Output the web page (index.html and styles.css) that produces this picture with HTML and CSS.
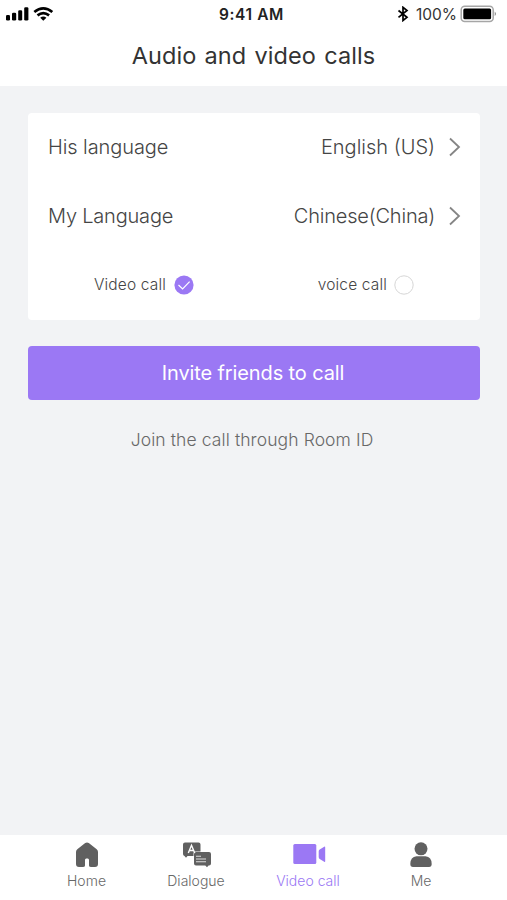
FILE: index.html
```html
<!DOCTYPE html>
<html lang="en">
<head>
<meta charset="utf-8">
<title>Audio and video calls</title>
<link rel="stylesheet" href="styles.css">
</head>
<body>
<div class="app">
  <header class="header">
    <div class="status">
      <div class="status-left">
        <svg width="50" height="16" viewBox="0 0 50 16">
          <rect x="1" y="9" width="4" height="5.500" rx="1.3"/><rect x="7" y="6.800" width="4.2" height="7.700" rx="1.3"/><rect x="13.2" y="4.200" width="4" height="10.300" rx="1.3"/><rect x="19.2" y="1.200" width="4.2" height="13.300" rx="1.3"/>
          <g fill="none" stroke="#000" stroke-width="2.7"><path d="M29.3 6Q38.300 -1.200 47.300 6"/><path d="M32.500 9.400Q38.300 5 44.100 9.400"/></g>
          <path d="M35.200 11.700Q38.300 9.400 41.400 11.700L38.300 14.700Z"/>
        </svg>
      </div>
      <span class="time">9:41 AM</span>
      <div class="status-right">
        <svg class="bluetooth" width="12" height="16" viewBox="0 0 12 16"><path d="M1.500 4.500L10 11.300L6 14.500V1.300L10 4.500L1.500 11.300" fill="none" stroke="#000" stroke-width="1.7"/></svg>
        <span class="percent">100%</span>
        <svg width="38" height="18" viewBox="0 0 38 18"><rect x="1.200" y="1.200" width="32" height="15.200" rx="3.500" fill="#fff" stroke="#a6a6a6" stroke-width="1.500"/><rect x="3.300" y="3.600" width="27.800" height="10.600" rx="1.500"/><path d="M34.700 6.400Q37.300 8.700 34.700 11Z" fill="#8d8d8d"/></svg>
      </div>
    </div>
    <h1 class="title">Audio and video calls</h1>
  </header>
  <main class="main">
    <section class="card">
      <div class="row">
        <span class="his">His language</span>
        <span class="value english">English (US)</span>
        <svg class="chevron" width="12" height="20" viewBox="0 0 12 20"><path d="M1 1.500L10 10L1 18.500"/></svg>
      </div>
      <div class="row">
        <span class="my">My Language</span>
        <span class="value chinese">Chinese(China)</span>
        <svg class="chevron" width="12" height="20" viewBox="0 0 12 20"><path d="M1 1.500L10 10L1 18.500"/></svg>
      </div>
      <div class="options">
        <div class="option video"><span>Video call</span><svg width="20" height="20" viewBox="0 0 20 20"><circle cx="10" cy="10" r="9.600" fill="#9b78f4"/><path d="M4.500 10L8.600 14L15.600 6.700" fill="none" stroke="#fff" stroke-width="1.200"/></svg></div>
        <div class="option voice"><span>voice call</span><svg width="20" height="20" viewBox="0 0 20 20"><circle cx="10" cy="10" r="9.200" fill="#fff" stroke="#d6d6d6"/></svg></div>
      </div>
    </section>
    <button class="invite" type="button">Invite friends to call</button>
    <a class="join">Join the call through Room ID</a>
  </main>
  <nav class="tabs">
    <div class="tab home">
      <svg width="24" height="26" viewBox="0 0 24 26"><path d="M10.200 1.100Q12 -0.200 13.800 1.100L21.700 7.200Q23 8.300 23 10V22Q23 25 20 25H16.200Q14 25 14 23.500V18Q14 16.500 12.800 16.500H11.200Q10 16.500 10 18V23.500Q10 25 7.800 25H4Q1 25 1 22V10Q1 8.300 2.300 7.200Z"/></svg>
      <span>Home</span>
    </div>
    <div class="tab dialogue">
      <svg width="30" height="26" viewBox="0 0 30 26"><path d="M3 .5H16.500Q18.500 .5 18.500 2.500V9.500H13.500Q11.500 9.500 11.500 11.500V14H5.500L4 15.800L2.500 14Q1 13.500 1 12V2.500Q1 .5 3 .5Z"/><path d="M14 10H27Q29 10 29 12V21.500Q29 23.500 27 23.500H26.500L25 25.200L23.300 23.500H14Q12 23.500 12 21.500V12Q12 10 14 10Z"/><path d="M6.300 11L9.500 3.300L12.700 11M7.300 8.500H11.700" fill="none" stroke="#fff" stroke-width="1.400"/><path d="M14 14.300H19M14 17H24M14 19.700H24" fill="none" stroke="#ddd" stroke-width="1.100"/></svg>
      <span>Dialogue</span>
    </div>
    <div class="tab call">
      <svg width="34" height="26" viewBox="0 0 34 26"><rect x="1.300" y="2" width="23" height="20" rx="1.500"/><path d="M33.200 5.500V19.200Q33.200 20.300 32.200 19.700L27.700 17Q26.700 16.300 26.700 15V9.200Q26.700 8 27.700 7.400L32.200 4.700Q33.200 4.300 33.200 5.500Z"/></svg>
      <span>Video call</span>
    </div>
    <div class="tab me">
      <svg width="24" height="26" viewBox="0 0 24 26"><circle cx="12" cy="6.800" r="6.500"/><path d="M7.500 14.300H16.500Q22.700 15 22.700 22Q22.700 25 20 25H4Q1.300 25 1.300 22Q1.300 15 7.500 14.300Z"/></svg>
      <span>Me</span>
    </div>
  </nav>
</div>
</body>
</html>
```
FILE: styles.css
```css
* { box-sizing: border-box; }
body { margin: 0; font-family: Inter, "Liberation Sans", sans-serif; color: #454545; }
svg { display: block; flex: none; }
span { white-space: nowrap; }
.app { width: 507px; height: 900px; display: flex; flex-direction: column; background: #f2f3f5; }
.header { height: 86px; background: #fff; }
.status { height: 28px; display: grid; grid-template-columns: 1fr auto 1fr; align-items: center; padding: 0 9px 0 5px; color: #222; }
.time { font-size: 15.500px; font-weight: 600; letter-spacing: .6px; }
.status-right { display: flex; align-items: center; justify-content: flex-end; }
.bluetooth { margin-right: 7px; }
.percent { font-size: 15.500px; color: #333; margin-right: 3px; }
.title { margin: 0; height: 56px; line-height: 56px; text-align: center; font-size: 23.500px; font-weight: 400; letter-spacing: .1px; word-spacing: 1.400px; color: #333; }
.main { flex: 1; padding: 27px 27px 0 28px; display: flex; flex-direction: column; }
.card { height: 207px; background: #fff; border-radius: 4px; }
.row { height: 68.500px; display: flex; align-items: center; padding: 0 19px 0 20px; font-size: 20px; font-weight: 350; }
.his { letter-spacing: -.08px; }
.my { letter-spacing: -.2px; }
.value { margin-left: auto; margin-right: 14px; }
.english { letter-spacing: 0; }
.chinese { letter-spacing: -.2px; }
.chevron { fill: none; stroke: #858585; stroke-width: 1.800; }
.options { height: 69px; display: flex; justify-content: space-between; padding: 0 66px; font-size: 15.500px; font-weight: 350; letter-spacing: .15px; }
.option { display: flex; align-items: center; gap: 7px; }
.video { gap: 8px; }
.invite { height: 54px; margin: 26px 0 0; padding: 0 2px 0 0; border: 0; border-radius: 4px; background: #9b78f4; color: #fff; font: 400 20px Inter, sans-serif; letter-spacing: -.12px; }
.join { margin: 27px 4px 0 0; height: 26px; line-height: 26px; text-align: center; font-size: 17.500px; font-weight: 350; letter-spacing: .1px; color: #686868; }
.tabs { height: 65px; background: #fff; display: grid; grid-template-columns: 111px 108px 116px 110px; padding: 7px 31px 0 31px; color: #686868; fill: #606060; }
.tab { display: flex; flex-direction: column; align-items: center; gap: 4px; font-size: 14px; font-weight: 350; line-height: 18px; }
.dialogue svg, .call svg { margin-left: 2px; }
.call { color: #9b78f4; fill: #9b78f4; }
```
